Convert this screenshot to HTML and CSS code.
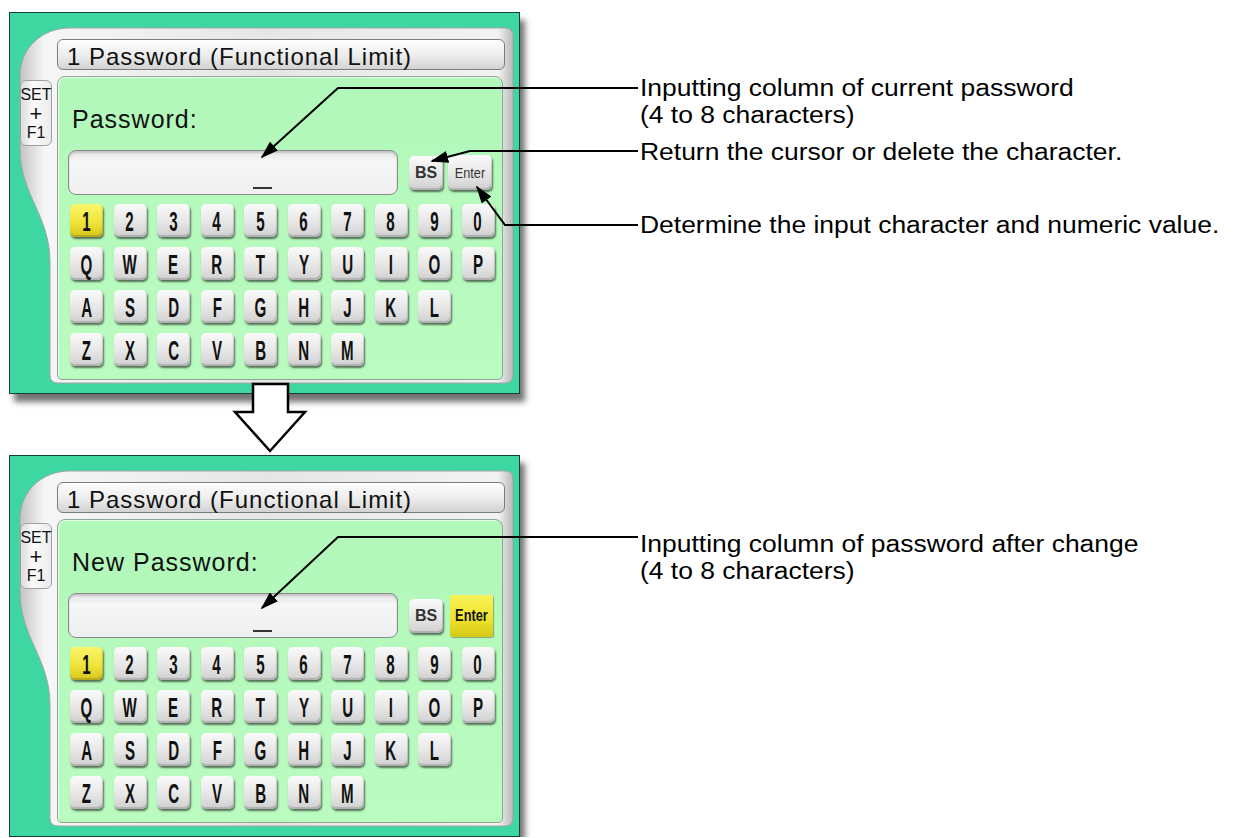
FILE: index.html
```html
<!DOCTYPE html>
<html lang="en">
<head>
  <meta charset="UTF-8">
  <meta name="viewport" content="width=device-width, initial-scale=1.0">
  <title>Password (Functional Limit)</title>
  <link rel="stylesheet" href="styles.css">
</head>
<body>
  <main class="manual">

    <!-- step 1: current password -->
    <section class="step step-current">
      <div class="panel">
        <svg class="bezel" width="509" height="380" viewBox="0 0 509 380">
          <defs>
            <linearGradient id="bz1" x1="0" y1="0" x2="1" y2="0">
              <stop offset="0" stop-color="#c4c4c4"/>
              <stop offset="0.05" stop-color="#f6f6f6"/>
              <stop offset="0.5" stop-color="#e6e6e6"/>
              <stop offset="0.97" stop-color="#f2f2f2"/>
              <stop offset="1" stop-color="#b8b8b8"/>
            </linearGradient>
          </defs>
          <path d="M60,15 H495 Q503,15 503,23 V362 Q503,370 495,370 H48 Q40,370 40,362 V249 C40,202 10,182 10,135 V63 C10,35 32,15 60,15 Z" fill="url(#bz1)" stroke="#a4a4a4"/>
        </svg>
        <div class="ui">
          <div class="title">1 Password (Functional Limit)</div>
          <div class="ui-body">
            <div class="shortcut"><span>SET</span><span class="plus">+</span><span>F1</span></div>
            <div class="screen">
              <div class="prompt">Password:</div>
              <div class="entry">
                <div class="field"><span class="cursor"></span></div>
                <div class="btn bs">BS</div>
                <div class="btn enter"><span>Enter</span></div>
              </div>
              <div class="keys">
                <div class="key-row">
                  <div class="key on"><span>1</span></div><div class="key"><span>2</span></div><div class="key"><span>3</span></div><div class="key"><span>4</span></div><div class="key"><span>5</span></div><div class="key"><span>6</span></div><div class="key"><span>7</span></div><div class="key"><span>8</span></div><div class="key"><span>9</span></div><div class="key"><span>0</span></div>
                </div>
                <div class="key-row">
                  <div class="key"><span>Q</span></div><div class="key"><span>W</span></div><div class="key"><span>E</span></div><div class="key"><span>R</span></div><div class="key"><span>T</span></div><div class="key"><span>Y</span></div><div class="key"><span>U</span></div><div class="key"><span>I</span></div><div class="key"><span>O</span></div><div class="key"><span>P</span></div>
                </div>
                <div class="key-row">
                  <div class="key"><span>A</span></div><div class="key"><span>S</span></div><div class="key"><span>D</span></div><div class="key"><span>F</span></div><div class="key"><span>G</span></div><div class="key"><span>H</span></div><div class="key"><span>J</span></div><div class="key"><span>K</span></div><div class="key"><span>L</span></div>
                </div>
                <div class="key-row">
                  <div class="key"><span>Z</span></div><div class="key"><span>X</span></div><div class="key"><span>C</span></div><div class="key"><span>V</span></div><div class="key"><span>B</span></div><div class="key"><span>N</span></div><div class="key"><span>M</span></div>
                </div>
              </div>
            </div>
          </div>
        </div>
      </div>
      <div class="notes">
        <p class="note">Inputting column of current password<br>(4 to 8 characters)</p>
        <p class="note note-bs">Return the cursor or delete the character.</p>
        <p class="note note-enter">Determine the input character and numeric value.</p>
      </div>
    </section>

    <!-- step 2: new password -->
    <section class="step step-new">
      <div class="panel">
        <svg class="bezel" width="509" height="380" viewBox="0 0 509 380">
          <defs>
            <linearGradient id="bz2" x1="0" y1="0" x2="1" y2="0">
              <stop offset="0" stop-color="#c4c4c4"/>
              <stop offset="0.05" stop-color="#f6f6f6"/>
              <stop offset="0.5" stop-color="#e6e6e6"/>
              <stop offset="0.97" stop-color="#f2f2f2"/>
              <stop offset="1" stop-color="#b8b8b8"/>
            </linearGradient>
          </defs>
          <path d="M60,15 H495 Q503,15 503,23 V362 Q503,370 495,370 H48 Q40,370 40,362 V249 C40,202 10,182 10,135 V63 C10,35 32,15 60,15 Z" fill="url(#bz2)" stroke="#a4a4a4"/>
        </svg>
        <div class="ui">
          <div class="title">1 Password (Functional Limit)</div>
          <div class="ui-body">
            <div class="shortcut"><span>SET</span><span class="plus">+</span><span>F1</span></div>
            <div class="screen">
              <div class="prompt">New Password:</div>
              <div class="entry">
                <div class="field"><span class="cursor"></span></div>
                <div class="btn bs">BS</div>
                <div class="btn enter active"><span>Enter</span></div>
              </div>
              <div class="keys">
                <div class="key-row">
                  <div class="key on"><span>1</span></div><div class="key"><span>2</span></div><div class="key"><span>3</span></div><div class="key"><span>4</span></div><div class="key"><span>5</span></div><div class="key"><span>6</span></div><div class="key"><span>7</span></div><div class="key"><span>8</span></div><div class="key"><span>9</span></div><div class="key"><span>0</span></div>
                </div>
                <div class="key-row">
                  <div class="key"><span>Q</span></div><div class="key"><span>W</span></div><div class="key"><span>E</span></div><div class="key"><span>R</span></div><div class="key"><span>T</span></div><div class="key"><span>Y</span></div><div class="key"><span>U</span></div><div class="key"><span>I</span></div><div class="key"><span>O</span></div><div class="key"><span>P</span></div>
                </div>
                <div class="key-row">
                  <div class="key"><span>A</span></div><div class="key"><span>S</span></div><div class="key"><span>D</span></div><div class="key"><span>F</span></div><div class="key"><span>G</span></div><div class="key"><span>H</span></div><div class="key"><span>J</span></div><div class="key"><span>K</span></div><div class="key"><span>L</span></div>
                </div>
                <div class="key-row">
                  <div class="key"><span>Z</span></div><div class="key"><span>X</span></div><div class="key"><span>C</span></div><div class="key"><span>V</span></div><div class="key"><span>B</span></div><div class="key"><span>N</span></div><div class="key"><span>M</span></div>
                </div>
              </div>
            </div>
          </div>
        </div>
      </div>
      <div class="notes">
        <p class="note">Inputting column of password after change<br>(4 to 8 characters)</p>
      </div>
    </section>

    <!-- leader lines and the step arrow, drawn over both panels -->
    <svg class="callouts" width="1241" height="838" viewBox="0 0 1241 838">
      <defs>
        <marker id="head" viewBox="0 0 10 10" refX="9" refY="5" markerWidth="9" markerHeight="6" preserveAspectRatio="none" orient="auto">
          <path d="M0,0 L10,5 L0,10 z" fill="#000"/>
        </marker>
      </defs>
      <g fill="none" stroke="#000" stroke-width="2">
        <polyline points="638,88 338,88 262,157" marker-end="url(#head)"/>
        <polyline points="638,151 470,151 432,161" marker-end="url(#head)"/>
        <polyline points="638,225 505,225 477,187" marker-end="url(#head)"/>
        <polyline points="638,537 338,537 262,608" marker-end="url(#head)"/>
      </g>
      <polygon points="253,384 288,384 288,412 305,412 270,451 235,412 253,412" fill="#fff" stroke="#000" stroke-width="2.5"/>
    </svg>
  </main>
</body>
</html>
```

FILE: styles.css
```css
html, body {
  margin: 0;
  overflow: hidden;
}

body {
  font-family: "Liberation Sans", Arial, sans-serif;
  color: #000;
  background: #fff;
}

.manual {
  padding: 12px 0 0 9px;
}

.step {
  display: flex;
  align-items: flex-start;
}

.step + .step {
  margin-top: 61px;
}

/* machine screen */
.panel {
  display: grid;
  width: 511px;
  height: 382px;
  box-sizing: border-box;
  border: 1px solid #17402f;
  background: #3ed7a2;
  box-shadow: 5px 8px 6px rgba(0, 0, 0, 0.55);
}

.bezel, .ui {
  grid-area: 1 / 1;
}

.ui {
  display: flex;
  flex-direction: column;
  padding-top: 26px;
}

.title {
  margin-left: 47px;
  width: 448px;
  height: 31px;
  box-sizing: border-box;
  padding-left: 9px;
  border: 1px solid #7c7c7c;
  border-radius: 6px;
  background: linear-gradient(#fdfdfd, #ececec 55%, #d2d2d2);
  box-shadow: inset 0 1px 0 #fff;
  font-size: 24px;
  line-height: 33px;
  letter-spacing: 1px;
  color: #111;
  white-space: nowrap;
}

.ui-body {
  display: flex;
  margin-top: 6px;
}

.shortcut {
  display: flex;
  flex-direction: column;
  align-items: center;
  width: 32px;
  height: 66px;
  margin: 4px 0 0 10px;
  box-sizing: border-box;
  padding-top: 6px;
  border: 1px solid #a0a0a0;
  border-radius: 6px;
  background: linear-gradient(90deg, #dcdcdc, #fafafa 40%, #ececec);
  font-size: 16px;
  line-height: 16px;
  color: #111;
}

.shortcut .plus {
  font-size: 22px;
  line-height: 22px;
}

.screen {
  width: 446px;
  height: 304px;
  margin-left: 5px;
  box-sizing: border-box;
  padding: 27px 0 0 10px;
  border: 1px solid #8ea592;
  border-radius: 8px 8px 5px 5px;
  background: linear-gradient(#b2f8ba, #bafbc0);
  box-shadow: inset 1px 1px 0 #e4ffe6;
}

.prompt {
  margin-left: 4px;
  font-size: 25px;
  line-height: 30px;
  letter-spacing: 1px;
  color: #111;
}

.entry {
  display: flex;
  align-items: center;
  margin-top: 16px;
}

.field {
  display: flex;
  align-items: flex-end;
  width: 330px;
  height: 45px;
  box-sizing: border-box;
  padding: 0 0 5px 184px;
  border: 1px solid #8a8a8a;
  border-radius: 8px;
  background: linear-gradient(#e6e6e6, #f6f6f6 25%, #efefef);
  box-shadow: inset 0 2px 2px rgba(0, 0, 0, 0.15);
}

.cursor {
  width: 19px;
  height: 2px;
  background: #333;
}

.btn, .key {
  display: flex;
  align-items: center;
  justify-content: center;
  box-sizing: border-box;
  border-radius: 5px;
  background: linear-gradient(#fafafa, #e6e6e6 55%, #d0d0d0);
  box-shadow: inset -1px -2px 1px rgba(0, 0, 0, 0.16), 1px 2px 2px rgba(0, 0, 0, 0.55);
  color: #111;
}

.bs {
  width: 34px;
  height: 34px;
  margin-left: 11px;
  font-size: 16px;
  font-weight: bold;
  color: #333;
}

.enter {
  width: 44px;
  height: 35px;
  margin-left: 5px;
  font-size: 15px;
  color: #333;
}

.enter span {
  display: inline-block;
  transform: scaleX(0.85);
}

.enter.active {
  width: 43px;
  height: 42px;
  margin-left: 7px;
  border-radius: 2px;
  background: linear-gradient(#f8f25a, #efe42c 55%, #d6c818);
  box-shadow: 1px 1px 1px rgba(0, 0, 0, 0.3);
  font-size: 16px;
  font-weight: bold;
  color: #111;
}

.enter.active span {
  transform: scaleX(0.8);
}

.keys {
  display: flex;
  flex-direction: column;
  gap: 10px;
  margin: 9px 0 0 2px;
}

.key-row {
  display: flex;
  gap: 10.5px;
}

.key {
  width: 33px;
  height: 33px;
  padding-top: 3px;
  font-size: 27px;
  font-weight: bold;
}

.key span {
  display: inline-block;
  transform: scaleX(0.56);
}

.key.on {
  background: linear-gradient(#fbf66c, #f0e43a 55%, #d6c61e);
}

/* notes on the right */
.notes {
  margin-left: 120px;
  padding-top: 62.5px;
}

.step-new .notes {
  padding-top: 75.5px;
}

.note {
  margin: 0;
  font-size: 23px;
  line-height: 27px;
  white-space: nowrap;
  transform: scaleX(1.15);
  transform-origin: left;
}

.note-bs {
  margin-top: 10.5px;
}

.note-enter {
  margin-top: 45.5px;
}

.callouts {
  position: absolute;
  left: 0;
  top: 0;
  pointer-events: none;
}
```
